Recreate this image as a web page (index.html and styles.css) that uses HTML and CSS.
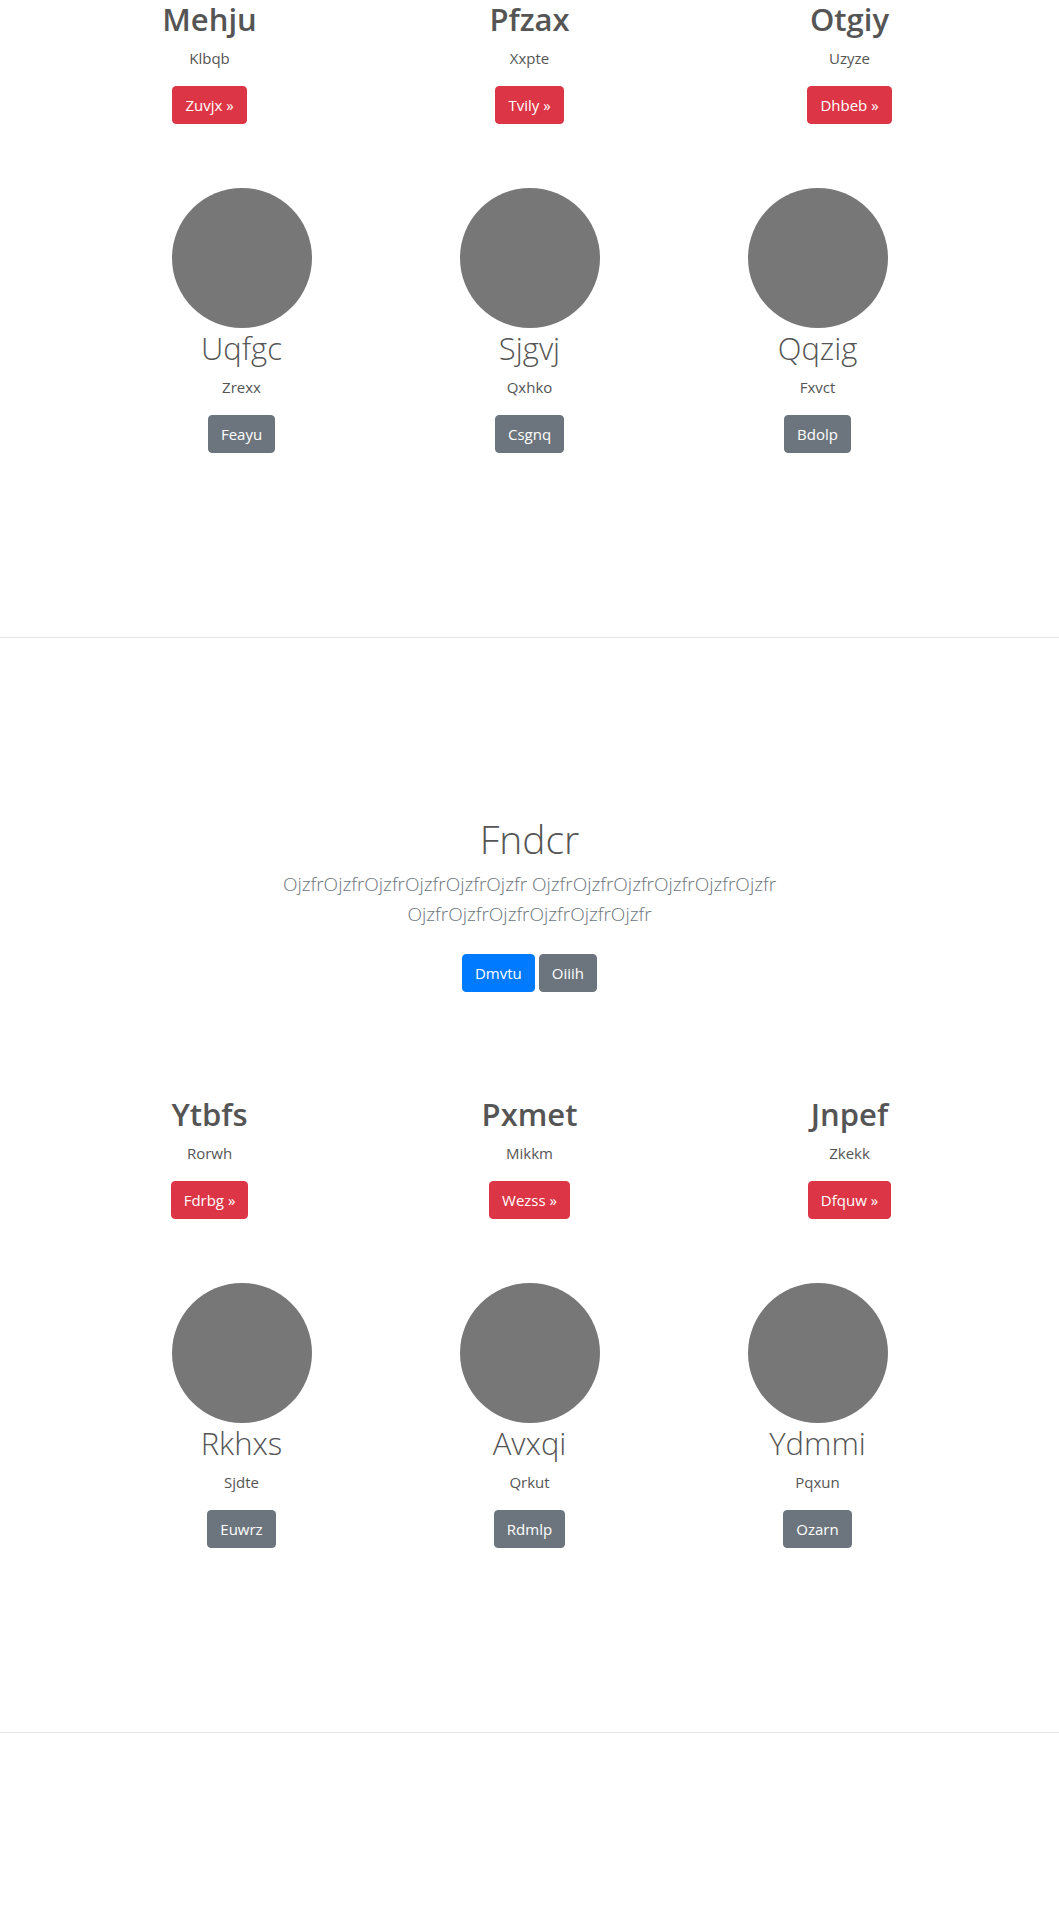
FILE: index.html
```html
<!DOCTYPE html>
<html lang="en">
<head>
<meta charset="utf-8">
<title>Page</title>
<link rel="stylesheet" href="styles.css">
</head>
<body>
<section class="unit">
  <div class="feature-row">
    <div class="col"><h2 class="feat-title">Mehju</h2><p class="sub">Klbqb</p><a class="btn btn-danger" href="#">Zuvjx »</a></div>
    <div class="col"><h2 class="feat-title">Pfzax</h2><p class="sub">Xxpte</p><a class="btn btn-danger" href="#">Tvily »</a></div>
    <div class="col"><h2 class="feat-title">Otgiy</h2><p class="sub">Uzyze</p><a class="btn btn-danger" href="#">Dhbeb »</a></div>
  </div>
  <div class="circle-row">
    <div class="col"><div class="circle"></div><h2 class="circ-title">Uqfgc</h2><p class="sub">Zrexx</p><a class="btn btn-secondary" href="#">Feayu</a></div>
    <div class="col"><div class="circle"></div><h2 class="circ-title">Sjgvj</h2><p class="sub">Qxhko</p><a class="btn btn-secondary" href="#">Csgnq</a></div>
    <div class="col"><div class="circle"></div><h2 class="circ-title">Qqzig</h2><p class="sub">Fxvct</p><a class="btn btn-secondary" href="#">Bdolp</a></div>
  </div>
</section>
<hr class="divider">
<section class="hero">
  <div class="hero-inner">
    <h1 class="hero-title">Fndcr</h1>
    <p class="lead">OjzfrOjzfrOjzfrOjzfrOjzfrOjzfr OjzfrOjzfrOjzfrOjzfrOjzfrOjzfr OjzfrOjzfrOjzfrOjzfrOjzfrOjzfr</p>
    <div class="hero-actions"><a class="btn btn-primary" href="#">Dmvtu</a><a class="btn btn-secondary" href="#">Oiiih</a></div>
  </div>
</section>
<section class="unit">
  <div class="feature-row">
    <div class="col"><h2 class="feat-title">Ytbfs</h2><p class="sub">Rorwh</p><a class="btn btn-danger" href="#">Fdrbg »</a></div>
    <div class="col"><h2 class="feat-title">Pxmet</h2><p class="sub">Mikkm</p><a class="btn btn-danger" href="#">Wezss »</a></div>
    <div class="col"><h2 class="feat-title">Jnpef</h2><p class="sub">Zkekk</p><a class="btn btn-danger" href="#">Dfquw »</a></div>
  </div>
  <div class="circle-row">
    <div class="col"><div class="circle"></div><h2 class="circ-title">Rkhxs</h2><p class="sub">Sjdte</p><a class="btn btn-secondary" href="#">Euwrz</a></div>
    <div class="col"><div class="circle"></div><h2 class="circ-title">Avxqi</h2><p class="sub">Qrkut</p><a class="btn btn-secondary" href="#">Rdmlp</a></div>
    <div class="col"><div class="circle"></div><h2 class="circ-title">Ydmmi</h2><p class="sub">Pqxun</p><a class="btn btn-secondary" href="#">Ozarn</a></div>
  </div>
</section>
<hr class="divider">
</body>
</html>
```
FILE: styles.css
```css
* { box-sizing: border-box; }
html, body { margin: 0; padding: 0; background: #fff; }
body {
  font-family: "Open Sans", "Noto Sans", "Liberation Sans", sans-serif;
  font-size: 16px;
  line-height: 24px;
  color: #555;
}
.unit { display: flex; flex-direction: column; }
.feature-row {
  width: 960px;
  margin: 0 auto;
  display: grid;
  grid-template-columns: repeat(3, 1fr);
}
.circle-row {
  width: 864px;
  margin: 64px auto 0;
  display: grid;
  grid-template-columns: repeat(3, 1fr);
}
.col { display: flex; flex-direction: column; align-items: center; text-align: center; }
.feat-title {
  margin: 0 0 8px;
  font-size: 31px;
  line-height: 38px;
  font-weight: 600;
  color: #555;
}
.circ-title {
  margin: 1px 0 8px;
  font-size: 31px;
  line-height: 38px;
  font-weight: 300;
  color: #555;
}
.sub { margin: 0 0 16px; font-size: 15px; line-height: 24px; color: #555; }
.circle { width: 140px; height: 140px; border-radius: 50%; background: #777; }
.btn {
  display: inline-block;
  padding: 6px 12px;
  border: 1px solid transparent;
  border-radius: 4px;
  font-size: 15px;
  line-height: 24px;
  color: #fff;
  text-decoration: none;
  white-space: nowrap;
}
.btn-danger { background: #dc3545; border-color: #dc3545; }
.btn-secondary { background: #6c757d; border-color: #6c757d; }
.btn-primary { background: #007bff; border-color: #007bff; }
.divider {
  margin: 184px 0 175px;
  border: 0;
  border-top: 1px solid #e5e5e5;
  height: 0;
}
.hero { padding-top: 2px; padding-bottom: 103px; }
.hero-inner {
  max-width: 640px;
  margin: 0 auto;
  padding: 0 15px;
  text-align: center;
}
.hero-title {
  margin: 0 0 6px;
  font-size: 39px;
  line-height: 48px;
  font-weight: 300;
  color: #555;
}
.lead {
  margin: 0 0 25px;
  font-size: 19px;
  line-height: 30px;
  font-weight: 300;
  color: #6c757d;
}
.hero-actions {
  display: flex;
  justify-content: center;
  gap: 4px;
}
```
